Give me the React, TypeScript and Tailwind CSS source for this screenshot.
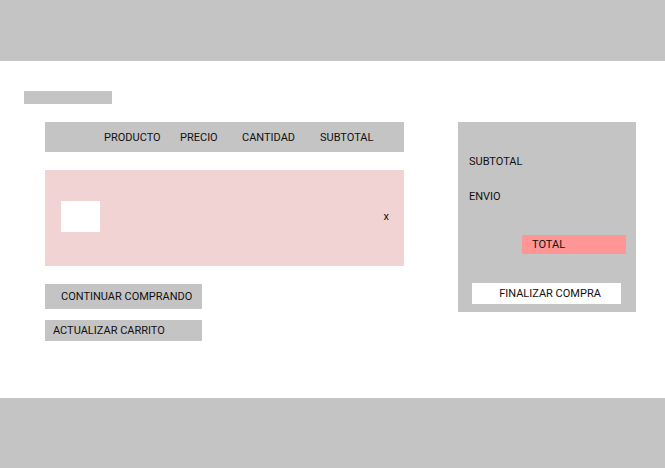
export default function App() {
  return (
    <div
      className="w-[665px] h-[468px] bg-white text-[11px] text-[#111] flex flex-col"
      style={{ fontFamily: "Roboto, 'Liberation Sans', sans-serif" }}
    >
      <header className="h-[61px] bg-[#c4c4c4]" />

      <main className="h-[337px] pt-[30px]">
        <div className="ml-[24px] w-[88px] h-[13px] bg-[#c4c4c4]" />

        <div className="flex mt-[18px] pl-[45px]">
          {/* carrito */}
          <div className="w-[359px] flex flex-col">
            <div className="h-[30px] bg-[#c4c4c4] flex items-center pl-[59px] leading-none">
              <span className="w-[76px]">PRODUCTO</span>
              <span className="w-[62px]">PRECIO</span>
              <span className="w-[78px]">CANTIDAD</span>
              <span>SUBTOTAL</span>
            </div>

            <div className="mt-[18px] h-[96px] bg-[#f2d3d4] flex items-center pl-[16px] pr-[15px] pb-[4px]">
              <div className="w-[39px] h-[31px] bg-white" />
              <span className="ml-auto leading-none">x</span>
            </div>

            <button className="mt-[18px] w-[157px] h-[25px] bg-[#c4c4c4] text-left pl-[16px] leading-none">
              CONTINUAR COMPRANDO
            </button>
            <button className="mt-[11px] w-[157px] h-[21px] bg-[#c4c4c4] text-left pl-[8px] leading-none">
              ACTUALIZAR CARRITO
            </button>
          </div>

          {/* resumen */}
          <div className="ml-[54px] w-[178px] h-[190px] bg-[#c4c4c4] flex flex-col pl-[11px] pr-[10px] pt-[33px] leading-none">
            <span className="h-[13px] flex items-center">SUBTOTAL</span>
            <span className="mt-[22px] h-[13px] flex items-center">ENVIO</span>
            <div className="mt-[32px] ml-auto w-[104px] h-[19px] bg-[#ff9696] flex items-center pl-[10px]">
              TOTAL
            </div>
            <button className="mt-[29px] ml-[3px] w-[149px] h-[21px] bg-white flex items-center justify-center pl-[7px]">
              FINALIZAR COMPRA
            </button>
          </div>
        </div>
      </main>

      <footer className="h-[70px] bg-[#c4c4c4]" />
    </div>
  )
}
